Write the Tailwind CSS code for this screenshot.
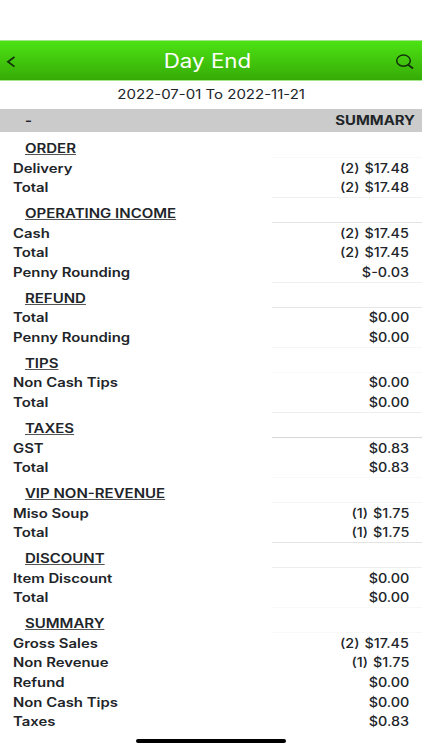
<!DOCTYPE html>
<html lang="en">
<head>
    <meta charset="UTF-8">
    <meta name="viewport" content="width=device-width, initial-scale=1.0">
    <title>Day End</title>
    <script src="https://cdn.jsdelivr.net/npm/@tailwindcss/browser@4"></script>
</head>
<body class="bg-white font-['Inter','Liberation_Sans',sans-serif] text-[#212529]">
    <div class="relative h-[750px] w-full overflow-hidden pt-10">
        <!-- Title bar -->
        <header class="flex h-[41px] items-center justify-between border-y border-[#a3e58c] bg-linear-to-b from-[#4de314] to-[#36ab06] pr-2 pl-1.5">
            <svg class="mt-0.5 h-3 w-[10px]" viewBox="0 0 10 12" fill="none" stroke="#12300a" stroke-width="1.7">
                <path d="M8.5 1 1.9 5.8l6.6 4.8" />
            </svg>
            <h1 class="origin-center scale-x-[1.145] pt-0.5 pl-[4px] text-[19.5px] leading-none text-white">Day End</h1>
            <svg class="mt-0.5 h-4 w-[19px]" viewBox="0 0 19 16" fill="none" stroke="#12300a" stroke-width="1.5">
                <ellipse cx="8.5" cy="6.7" rx="6.8" ry="5.6" />
                <path d="M13.2 10.7l4.8 3.8" stroke-width="1.8" />
            </svg>
        </header>
        <!-- Date range -->
        <div class="flex h-7 items-center justify-center pt-px text-[12.5px]">
            <span class="origin-center scale-x-[1.2]">2022-07-01 To 2022-11-21</span>
        </div>
        <!-- Column titles -->
        <div class="flex h-[23px] items-center justify-between bg-[#cbcbcb] pt-0.5 pr-[7px] pl-[25px] text-[12.5px] font-bold">
            <span class="origin-left scale-x-[1.19]">-</span>
            <span class="origin-right scale-x-[1.19]">SUMMARY</span>
        </div>
        <main id="report"></main>
        <div class="absolute top-[739px] left-[136px] h-1 w-[150px] rounded-full bg-black"></div>
    </div>
    <script>
        const sections = [
            { title: 'ORDER', rows: [['Delivery', '(2) $17.48'], ['Total', '(2) $17.48']] },
            { title: 'OPERATING INCOME', rows: [['Cash', '(2) $17.45'], ['Total', '(2) $17.45'], ['Penny Rounding', '$-0.03']] },
            { title: 'REFUND', rows: [['Total', '$0.00'], ['Penny Rounding', '$0.00']] },
            { title: 'TIPS', rows: [['Non Cash Tips', '$0.00'], ['Total', '$0.00']] },
            { title: 'TAXES', rows: [['GST', '$0.83'], ['Total', '$0.83']] },
            { title: 'VIP NON-REVENUE', rows: [['Miso Soup', '(1) $1.75'], ['Total', '(1) $1.75']] },
            { title: 'DISCOUNT', rows: [['Item Discount', '$0.00'], ['Total', '$0.00']] },
            { title: 'SUMMARY', rows: [['Gross Sales', '(2) $17.45'], ['Non Revenue', '(1) $1.75'], ['Refund', '$0.00'], ['Non Cash Tips', '$0.00'], ['Taxes', '$0.83']] }
        ];

        // top and bottom rule of each section's heading cell
        const rules = [
            'border-b-[#f8f8f8] border-t-transparent',
            'border-b-[#e4e4e4] border-t-[#f0f0f0]',
            'border-b-[#e6e6e6] border-t-[#f0f0f0]',
            'border-b-[#f8f8f8] border-t-[#f6f6f6]',
            'border-b-[#d8d8d8] border-t-[#eeeeee]',
            'border-b-[#f5f5f5] border-t-[#f8f8f8]',
            'border-b-[#eeeeee] border-t-[#e4e4e4]',
            'border-b-[#f8f8f8] border-t-[#f8f8f8]'
        ];

        document.getElementById('report').innerHTML = sections.map((section, i) => `
            <section class="text-[12.5px]">
                <div class="flex h-[25.8px] justify-between">
                    <h2 class="origin-left scale-x-[1.2] pt-[8.2px] pl-[20.8px] leading-[18px] font-semibold underline decoration-[#555] decoration-1 underline-offset-[1px]">${section.title}</h2>
                    <div class="w-[150px] border-y ${rules[i]}"></div>
                </div>
                ${section.rows.map(([name, amount]) => `
                <div class="flex h-[19.65px] items-center justify-between px-[13px] pt-[2.6px]">
                    <span class="origin-left scale-x-[1.19] font-semibold">${name}</span>
                    <span class="origin-right scale-x-[1.15] font-medium [word-spacing:1px]">${amount}</span>
                </div>`).join('')}
            </section>`).join('');
    </script>
</body>
</html>
